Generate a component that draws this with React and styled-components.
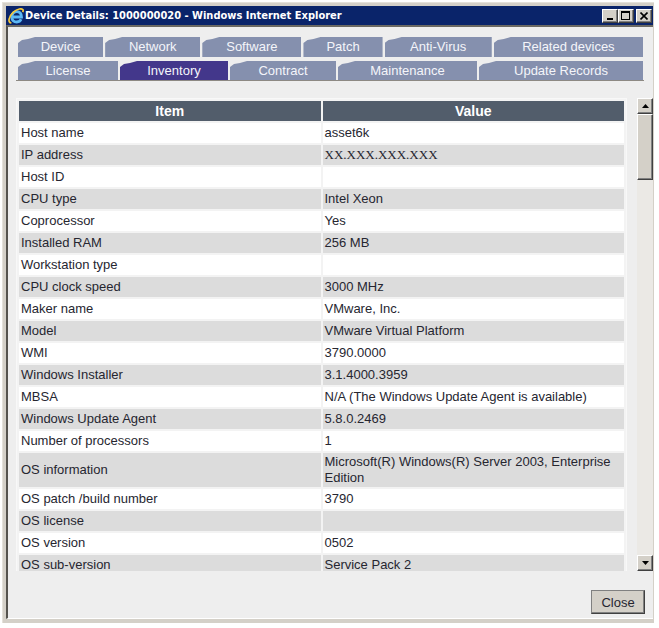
import { useRef } from "react";
import styled, { createGlobalStyle } from "styled-components";

const GlobalStyle = createGlobalStyle`
  * {
    box-sizing: border-box;
  }

  body {
    margin: 0;
    background: #fff;
    color: #262630;
    font-family: "Liberation Sans", Arial, sans-serif;
    font-size: 13px;
  }
`;

const Desktop = styled.div`
  height: 100vh;
  padding: 2px 5px 5px 2px;
`;

const Window = styled.div`
  height: 100%;
  display: flex;
  flex-direction: column;
  padding: 3px 1px 4px 3px;
  background: #d4d0c8;
  border-top: 1px solid #e4e1da;
  border-left: 1px solid #e4e1da;
`;

const TitleBar = styled.header`
  height: 19px;
  flex: none;
  display: flex;
  align-items: center;
  padding: 0 1px 0 2px;
  background: #0a246a;
`;

const Title = styled.h1`
  flex: 1;
  margin: 0 0 0 1px;
  color: #fff;
  font-family: "DejaVu Sans Condensed", "DejaVu Sans", sans-serif;
  font-size: 11px;
  line-height: 18px;
  font-weight: bold;
  white-space: nowrap;
`;

const bevel = `
  padding: 0;
  display: flex;
  align-items: center;
  justify-content: center;
  background: #d4d0c8;
  border: 1px solid;
  border-color: #fff #404040 #404040 #fff;
  box-shadow: inset -1px -1px 0 #808080;
`;

const WindowButton = styled.button`
  ${bevel}
  width: 16px;
  height: 14px;
  margin-left: ${({ $apart }) => ($apart ? 2 : 0)}px;
`;

const Page = styled.main`
  flex: 1;
  min-height: 0;
  display: flex;
  flex-direction: column;
  background: #eee;
  border-top: 2px solid #6b6963;
  border-left: 2px solid #55534e;
  border-bottom: 1px solid #fff;
`;

const Tabs = styled.nav`
  margin: 10px 9px 0 8px;
  border-bottom: 1px solid #8d8983;
`;

const TabRow = styled.div`
  display: flex;
  gap: 2px;
  padding: 0 1px 0 2px;
  margin-bottom: ${({ $last }) => ($last ? 0 : 4)}px;
`;

const Tab = styled.button`
  flex: ${({ $grow }) => $grow} 1 0;
  height: ${({ $short }) => ($short ? 19 : 20)}px;
  padding: 0;
  border: none;
  background: ${({ $active }) => ($active ? "#43378b" : "#8590ae")};
  color: #f4f5fa;
  font: inherit;
  line-height: 20px;
  white-space: nowrap;
  clip-path: polygon(0 6px, 4px 3px, 10px 2px, 17px 0, 100% 0, 100% 100%, 0 100%);
`;

const Body = styled.div`
  flex: 1;
  min-height: 0;
  display: flex;
  justify-content: space-between;
  gap: 10px;
  margin: 17px 0 0 8px;
`;

const Pane = styled.div`
  flex: 1;
  overflow: hidden;
`;

const Table = styled.table`
  width: 100%;
  table-layout: fixed;
  border: 1px solid #f8f8f8;
  border-collapse: separate;
  border-spacing: 2px;
  background: #f3f3f3;
`;

const HeadCell = styled.th`
  height: 20px;
  padding: 0;
  background: #525d6b;
  color: #fff;
  font-size: 14px;
  line-height: 20px;
`;

const Cell = styled.td`
  height: 20px;
  padding: 1px 2px;
  background: ${({ $shaded }) => ($shaded ? "#dcdcdc" : "#fff")};
  line-height: 16px;
`;

const Masked = styled.span`
  font-family: "Liberation Serif", "Times New Roman", serif;
`;

const ScrollBar = styled.div`
  width: 16px;
  display: flex;
  flex-direction: column;
  background: #ebe9e5;
`;

const ScrollButton = styled.button`
  ${bevel}
  height: 16px;
  flex: none;
`;

const Track = styled.div`
  flex: 1;
`;

const Thumb = styled.div`
  ${bevel}
  height: 15%;
`;

const Footer = styled.footer`
  display: flex;
  justify-content: flex-end;
  padding: 19px 8px 4px;
`;

const CloseButton = styled.button`
  ${bevel}
  width: 54px;
  height: 24px;
  border-color: #808080 #404040 #404040 #808080;
  color: #262630;
  font: inherit;
`;

const tabRows = [
  [
    ["Device", 85],
    ["Network", 95],
    ["Software", 99],
    ["Patch", 79],
    ["Anti-Virus", 107],
    ["Related devices", 149],
  ],
  [
    ["License", 100],
    ["Inventory", 108],
    ["Contract", 106],
    ["Maintenance", 139],
    ["Update Records", 164],
  ],
];

const items = [
  ["Host name", "asset6k"],
  ["IP address", <Masked key="ip">XX.XXX.XXX.XXX</Masked>],
  ["Host ID", ""],
  ["CPU type", "Intel Xeon"],
  ["Coprocessor", "Yes"],
  ["Installed RAM", "256 MB"],
  ["Workstation type", ""],
  ["CPU clock speed", "3000 MHz"],
  ["Maker name", "VMware, Inc."],
  ["Model", "VMware Virtual Platform"],
  ["WMI", "3790.0000"],
  ["Windows Installer", "3.1.4000.3959"],
  ["MBSA", "N/A (The Windows Update Agent is available)"],
  ["Windows Update Agent", "5.8.0.2469"],
  ["Number of processors", "1"],
  [
    "OS information",
    "Microsoft(R) Windows(R) Server 2003, Enterprise Edition",
  ],
  ["OS patch /build number", "3790"],
  ["OS license", ""],
  ["OS version", "0502"],
  ["OS sub-version", "Service Pack 2"],
];

const BrowserIcon = () => (
  <svg width="16" height="16" viewBox="0 0 16 16" fill="none" aria-hidden="true">
    <path
      d="M4.500 9H13.500C13.500 5.600 11.600 3.600 8.800 3.600S3.800 5.700 3.800 8.900s2.100 5.100 5 5.100c2.100 0 3.600-1 4.300-2.700"
      stroke="#5cb8f4"
      strokeWidth="2.800"
    />
    <path
      d="M3.400 15C-.6 14.600.600 8.600 5.400 4.200 9.400.6 14 .1 15 1.800c.3.700.1 1.500-.3 2.300"
      stroke="#f5c93c"
      strokeWidth="1.700"
    />
  </svg>
);

const Arrow = ({ down }) => (
  <svg width="7" height="4" viewBox="0 0 7 4" aria-hidden="true">
    <path d={down ? "M0 0h7L3.500 4z" : "M0 4h7L3.500 0z"} fill="#000" />
  </svg>
);

export default function App() {
  const pane = useRef(null);
  const scroll = (top) => pane.current.scrollBy({ top });

  return (
    <>
      <GlobalStyle />
      <Desktop>
        <Window>
          <TitleBar>
            <BrowserIcon />
            <Title>Device Details: 1000000020 - Windows Internet Explorer</Title>
            <WindowButton aria-label="Minimize">
              <svg width="10" height="9" viewBox="0 0 10 9">
                <path d="M2 7h6v2H2z" fill="#000" />
              </svg>
            </WindowButton>
            <WindowButton aria-label="Maximize">
              <svg width="10" height="9" viewBox="0 0 10 9">
                <path d="M0 0h9v9H0zM1 2v6h7V2z" fill="#000" fillRule="evenodd" />
              </svg>
            </WindowButton>
            <WindowButton aria-label="Close window" $apart>
              <svg width="8" height="8" viewBox="0 0 8 8">
                <path d="M.5.5l7 7M7.500.5l-7 7" stroke="#000" strokeWidth="1.600" />
              </svg>
            </WindowButton>
          </TitleBar>
          <Page>
            <Tabs>
              {tabRows.map((row, i) => (
                <TabRow key={i} $last={i === 1}>
                  {row.map(([label, grow]) => (
                    <Tab
                      key={label}
                      $grow={grow}
                      $short={i === 1}
                      $active={label === "Inventory"}
                    >
                      {label}
                    </Tab>
                  ))}
                </TabRow>
              ))}
            </Tabs>
            <Body>
              <Pane ref={pane}>
                <Table>
                  <thead>
                    <tr>
                      <HeadCell scope="col">Item</HeadCell>
                      <HeadCell scope="col">Value</HeadCell>
                    </tr>
                  </thead>
                  <tbody>
                    {items.map(([name, value], i) => (
                      <tr key={name}>
                        <Cell $shaded={i % 2 === 1}>{name}</Cell>
                        <Cell $shaded={i % 2 === 1}>{value}</Cell>
                      </tr>
                    ))}
                  </tbody>
                </Table>
              </Pane>
              <ScrollBar>
                <ScrollButton aria-label="Scroll up" onClick={() => scroll(-22)}>
                  <Arrow />
                </ScrollButton>
                <Track>
                  <Thumb />
                </Track>
                <ScrollButton aria-label="Scroll down" onClick={() => scroll(22)}>
                  <Arrow down />
                </ScrollButton>
              </ScrollBar>
            </Body>
            <Footer>
              <CloseButton>Close</CloseButton>
            </Footer>
          </Page>
        </Window>
      </Desktop>
    </>
  );
}
